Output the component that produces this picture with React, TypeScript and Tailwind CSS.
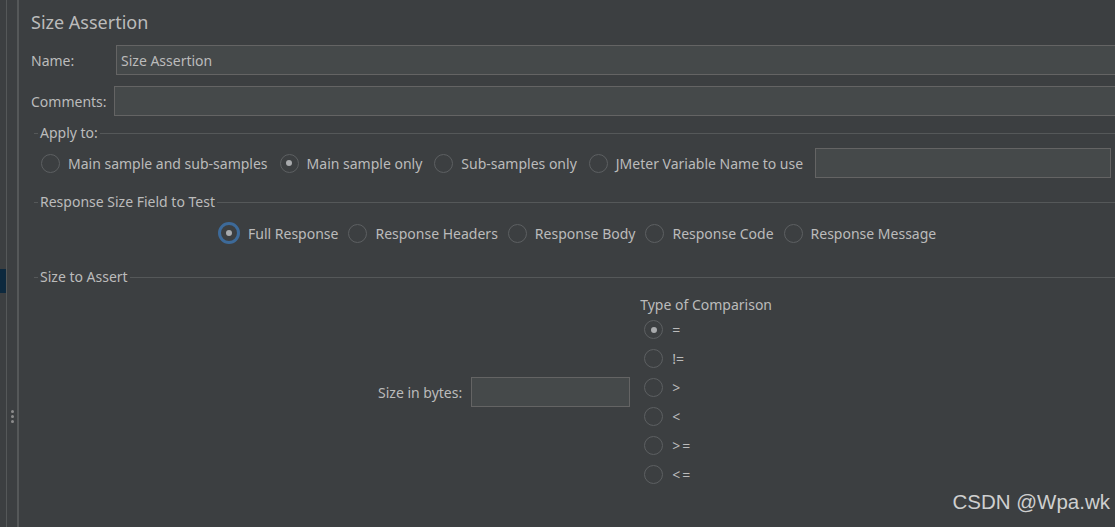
import React from 'react'

const font = { fontFamily: '"Noto Sans", "Open Sans", sans-serif' }

function Radio({ checked = false, focused = false }: { checked?: boolean; focused?: boolean }) {
  if (focused) {
    return (
      <span className="flex h-[22px] w-[22px] shrink-0 items-center justify-center rounded-full border-[3px] border-[#3d6a99] bg-[#3c3f41]">
        {checked && <span className="h-[6px] w-[6px] rounded-full bg-[#a9abad]" />}
      </span>
    )
  }
  return (
    <span className="flex h-[19px] w-[19px] shrink-0 items-center justify-center rounded-full border border-[#5d6062] bg-[#3c3f41]">
      {checked && <span className="h-[6px] w-[6px] rounded-full bg-[#a9abad]" />}
    </span>
  )
}

function Option({ label, checked, focused }: { label: string; checked?: boolean; focused?: boolean }) {
  return (
    <label className="flex items-center gap-[8px]">
      <Radio checked={checked} focused={focused} />
      <span>{label}</span>
    </label>
  )
}

function Legend({ title }: { title: string }) {
  return (
    <div className="flex h-[20px] items-center">
      <span className="h-px w-[4px] bg-[#555859]" />
      <span className="ml-[2px] mr-[2px] leading-none">{title}</span>
      <span className="h-px flex-1 bg-[#555859]" />
    </div>
  )
}

const comparisons = ['=', '!=', '>', '<', '>=', '<=']

export default function App() {
  return (
    <div
      className="relative flex h-[527px] w-[1115px] overflow-hidden bg-[#3c3f41] text-[14px] text-[#bbbbbb]"
      style={font}
    >
      {/* left splitter */}
      <div className="w-[7px] shrink-0 border-r border-[#555859]">
        <div className="mt-[269px] h-[24px] bg-[#0d293e]" />
      </div>
      <div className="flex w-[12px] shrink-0 flex-col items-center gap-[2px] border-r-2 border-[#555859] pt-[410px]">
        <span className="h-[3px] w-[3px] rounded-full bg-[#8c8c8c]" />
        <span className="h-[3px] w-[3px] rounded-full bg-[#8c8c8c]" />
        <span className="h-[3px] w-[3px] rounded-full bg-[#8c8c8c]" />
      </div>

      {/* main panel */}
      <div className="flex min-w-0 flex-1 flex-col">
        <div className="pl-[12px] pt-[10px]">
          <h1 className="h-[24px] text-[18px] leading-[24px]">Size Assertion</h1>

          <div className="mt-[11px] flex items-center">
            <span className="w-[85px] shrink-0">Name:</span>
            <input
              readOnly
              value="Size Assertion"
              className="h-[30px] w-[1100px] shrink-0 border border-[#646464] bg-[#45494a] px-[4px] text-[#bbbbbb] outline-none"
            />
          </div>

          <div className="mt-[11px] flex items-center">
            <span className="w-[83px] shrink-0">Comments:</span>
            <input
              readOnly
              className="h-[30px] w-[1100px] shrink-0 border border-[#646464] bg-[#45494a] px-[4px] outline-none"
            />
          </div>
        </div>

        <div className="pl-[15px]">
          {/* Apply to */}
          <div className="mt-[7px]">
            <Legend title="Apply to:" />
          </div>
          <div className="mt-[5px] flex h-[30px] items-center pl-[7px]">
            <div className="flex items-center gap-[12px]">
              <Option label="Main sample and sub-samples" />
              <Option label="Main sample only" checked />
              <Option label="Sub-samples only" />
              <Option label="JMeter Variable Name to use" />
            </div>
            <input
              readOnly
              className="ml-[12px] h-[30px] w-[296px] shrink-0 border border-[#646464] bg-[#45494a] outline-none"
            />
          </div>

          {/* Response size field */}
          <div className="mt-[14px]">
            <Legend title="Response Size Field to Test" />
          </div>
          <div className="mt-[7px] flex h-[28px] items-center gap-[10px] pl-[184px]">
            <Option label="Full Response" checked focused />
            <Option label="Response Headers" />
            <Option label="Response Body" />
            <Option label="Response Code" />
            <Option label="Response Message" />
          </div>

          {/* Size to assert */}
          <div className="mt-[20px]">
            <Legend title="Size to Assert" />
          </div>
          <div className="mt-[8px] flex items-center pl-[344px]">
            <span>Size in bytes:</span>
            <input
              readOnly
              className="ml-[9px] h-[30px] w-[159px] border border-[#646464] bg-[#45494a] outline-none"
            />
            <div className="ml-[10px] flex flex-col">
              <span className="h-[20px] leading-[20px]">Type of Comparison</span>
              {comparisons.map((c, i) => (
                <label key={c} className="flex h-[29px] items-center gap-[9px] pl-[4px]">
                  <Radio checked={i === 0} />
                  <span className={c.length === 2 && c[0] !== '!' ? 'tracking-[2px]' : ''}>{c}</span>
                </label>
              ))}
            </div>
          </div>
        </div>
      </div>

      <div
        className="absolute bottom-[9px] right-[5px] text-[20.5px] text-[#cfcfcf]"
        style={{ fontFamily: '"Liberation Sans", Arial, sans-serif' }}
      >
        CSDN @Wpa.wk
      </div>
    </div>
  )
}
